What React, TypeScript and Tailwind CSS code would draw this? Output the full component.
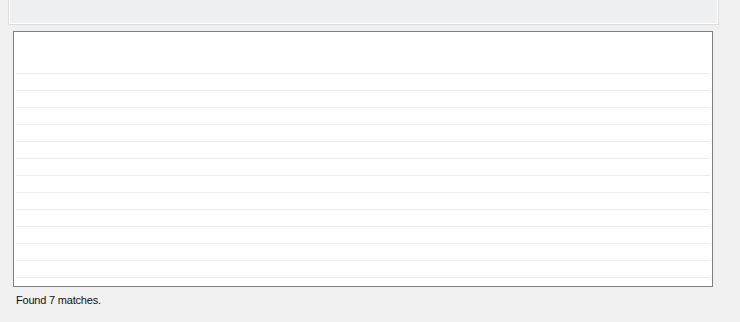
export default function App() {
  const rows = Array.from({ length: 13 }, (_, i) => i);

  return (
    <div className="h-[322px] w-[740px] overflow-hidden bg-[#f0f0f0] font-['Liberation_Sans',Tahoma,sans-serif]">
      <div className="ml-[8px] h-[25px] w-[711px] border-x border-b border-[#dcdcdc] bg-[#f0f0f0]">
        <div className="h-full w-full border-x border-b border-white bg-[#eeeff0]" />
      </div>

      <div className="ml-[13px] mt-[6px] h-[256px] w-[700px] border border-[#7e7e7e] bg-white">
        <div className="h-[41px]" />
        {rows.map((row) => (
          <div key={row} className="mx-[2px] h-[17px] border-t border-[#ececec]" />
        ))}
      </div>

      <p className="ml-[16px] mt-[6px] text-[11px] leading-[14px] tracking-[-0.2px] text-[#111111]">Found 7 matches.</p>
    </div>
  );
}
